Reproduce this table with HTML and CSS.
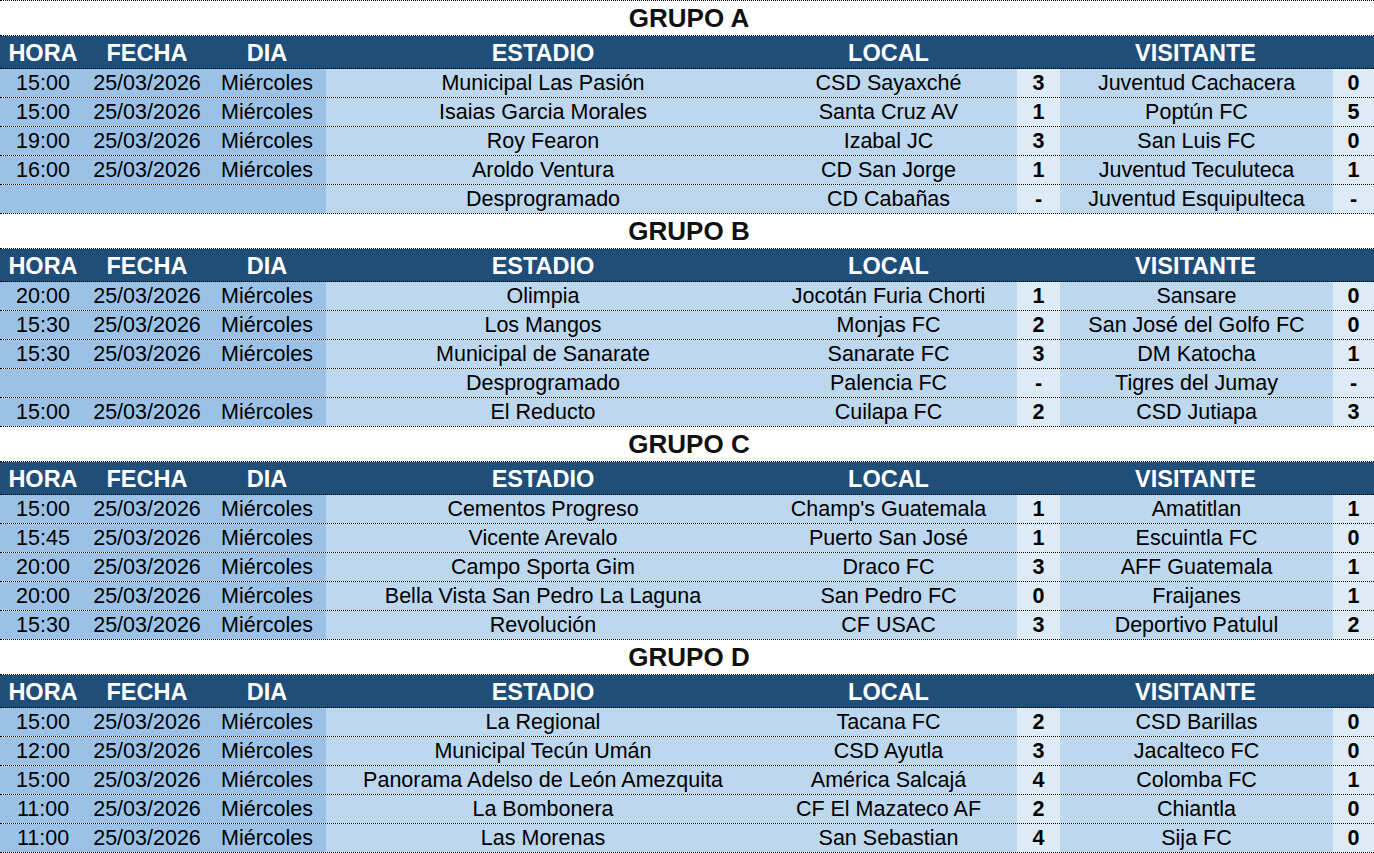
FILE: index.html
```html
<!DOCTYPE html>
<html lang="es">
<head>
<meta charset="utf-8">
<title>Grupos</title>
<link rel="stylesheet" href="styles.css">
</head>
<body>
<div class="sheet">

  <section class="group">
    <div class="title">GRUPO A</div>
    <div class="row head"><div>HORA</div><div>FECHA</div><div>DIA</div><div>ESTADIO</div><div>LOCAL</div><div class="span3">VISITANTE</div></div>
    <div class="row"><div class="l">15:00</div><div class="l">25/03/2026</div><div class="l">Miércoles</div><div class="m">Municipal Las Pasión</div><div class="m">CSD Sayaxché</div><div class="s">3</div><div class="m">Juventud Cachacera</div><div class="s">0</div></div>
    <div class="row"><div class="l">15:00</div><div class="l">25/03/2026</div><div class="l">Miércoles</div><div class="m">Isaias Garcia Morales</div><div class="m">Santa Cruz AV</div><div class="s">1</div><div class="m">Poptún FC</div><div class="s">5</div></div>
    <div class="row"><div class="l">19:00</div><div class="l">25/03/2026</div><div class="l">Miércoles</div><div class="m">Roy Fearon</div><div class="m">Izabal JC</div><div class="s">3</div><div class="m">San Luis FC</div><div class="s">0</div></div>
    <div class="row"><div class="l">16:00</div><div class="l">25/03/2026</div><div class="l">Miércoles</div><div class="m">Aroldo Ventura</div><div class="m">CD San Jorge</div><div class="s">1</div><div class="m">Juventud Teculuteca</div><div class="s">1</div></div>
    <div class="row"><div class="l"></div><div class="l"></div><div class="l"></div><div class="m">Desprogramado</div><div class="m">CD Cabañas</div><div class="s">-</div><div class="m">Juventud Esquipulteca</div><div class="s">-</div></div>
  </section>

  <section class="group">
    <div class="title">GRUPO B</div>
    <div class="row head"><div>HORA</div><div>FECHA</div><div>DIA</div><div>ESTADIO</div><div>LOCAL</div><div class="span3">VISITANTE</div></div>
    <div class="row"><div class="l">20:00</div><div class="l">25/03/2026</div><div class="l">Miércoles</div><div class="m">Olimpia</div><div class="m">Jocotán Furia Chorti</div><div class="s">1</div><div class="m">Sansare</div><div class="s">0</div></div>
    <div class="row"><div class="l">15:30</div><div class="l">25/03/2026</div><div class="l">Miércoles</div><div class="m">Los Mangos</div><div class="m">Monjas FC</div><div class="s">2</div><div class="m">San José del Golfo FC</div><div class="s">0</div></div>
    <div class="row"><div class="l">15:30</div><div class="l">25/03/2026</div><div class="l">Miércoles</div><div class="m">Municipal de Sanarate</div><div class="m">Sanarate FC</div><div class="s">3</div><div class="m">DM Katocha</div><div class="s">1</div></div>
    <div class="row"><div class="l"></div><div class="l"></div><div class="l"></div><div class="m">Desprogramado</div><div class="m">Palencia FC</div><div class="s">-</div><div class="m">Tigres del Jumay</div><div class="s">-</div></div>
    <div class="row"><div class="l">15:00</div><div class="l">25/03/2026</div><div class="l">Miércoles</div><div class="m">El Reducto</div><div class="m">Cuilapa FC</div><div class="s">2</div><div class="m">CSD Jutiapa</div><div class="s">3</div></div>
  </section>

  <section class="group">
    <div class="title">GRUPO C</div>
    <div class="row head"><div>HORA</div><div>FECHA</div><div>DIA</div><div>ESTADIO</div><div>LOCAL</div><div class="span3">VISITANTE</div></div>
    <div class="row"><div class="l">15:00</div><div class="l">25/03/2026</div><div class="l">Miércoles</div><div class="m">Cementos Progreso</div><div class="m">Champ's Guatemala</div><div class="s">1</div><div class="m">Amatitlan</div><div class="s">1</div></div>
    <div class="row"><div class="l">15:45</div><div class="l">25/03/2026</div><div class="l">Miércoles</div><div class="m">Vicente Arevalo</div><div class="m">Puerto San José</div><div class="s">1</div><div class="m">Escuintla FC</div><div class="s">0</div></div>
    <div class="row"><div class="l">20:00</div><div class="l">25/03/2026</div><div class="l">Miércoles</div><div class="m">Campo Sporta Gim</div><div class="m">Draco FC</div><div class="s">3</div><div class="m">AFF Guatemala</div><div class="s">1</div></div>
    <div class="row"><div class="l">20:00</div><div class="l">25/03/2026</div><div class="l">Miércoles</div><div class="m">Bella Vista San Pedro La Laguna</div><div class="m">San Pedro FC</div><div class="s">0</div><div class="m">Fraijanes</div><div class="s">1</div></div>
    <div class="row"><div class="l">15:30</div><div class="l">25/03/2026</div><div class="l">Miércoles</div><div class="m">Revolución</div><div class="m">CF USAC</div><div class="s">3</div><div class="m">Deportivo Patulul</div><div class="s">2</div></div>
  </section>

  <section class="group">
    <div class="title">GRUPO D</div>
    <div class="row head"><div>HORA</div><div>FECHA</div><div>DIA</div><div>ESTADIO</div><div>LOCAL</div><div class="span3">VISITANTE</div></div>
    <div class="row"><div class="l">15:00</div><div class="l">25/03/2026</div><div class="l">Miércoles</div><div class="m">La Regional</div><div class="m">Tacana FC</div><div class="s">2</div><div class="m">CSD Barillas</div><div class="s">0</div></div>
    <div class="row"><div class="l">12:00</div><div class="l">25/03/2026</div><div class="l">Miércoles</div><div class="m">Municipal Tecún Umán</div><div class="m">CSD Ayutla</div><div class="s">3</div><div class="m">Jacalteco FC</div><div class="s">0</div></div>
    <div class="row"><div class="l">15:00</div><div class="l">25/03/2026</div><div class="l">Miércoles</div><div class="m">Panorama Adelso de León Amezquita</div><div class="m">América Salcajá</div><div class="s">4</div><div class="m">Colomba FC</div><div class="s">1</div></div>
    <div class="row"><div class="l">11:00</div><div class="l">25/03/2026</div><div class="l">Miércoles</div><div class="m">La Bombonera</div><div class="m">CF El Mazateco AF</div><div class="s">2</div><div class="m">Chiantla</div><div class="s">0</div></div>
    <div class="row"><div class="l">11:00</div><div class="l">25/03/2026</div><div class="l">Miércoles</div><div class="m">Las Morenas</div><div class="m">San Sebastian</div><div class="s">4</div><div class="m">Sija FC</div><div class="s">0</div></div>
  </section>

</div>
</body>
</html>
```

FILE: styles.css
```css
* { box-sizing: border-box; }

html, body {
  margin: 0;
  padding: 0;
  background: #ffffff;
}

body {
  font-family: "Liberation Sans", Arial, sans-serif;
  color: #000000;
  width: 1374px;
  overflow: hidden;
}

.sheet {
  width: 1374px;
  border-top: 1px dotted #000;
}

.title {
  height: 35px;
  border-bottom: 1px dotted #000;
  font-weight: bold;
  font-size: 26px;
  line-height: 35px;
  text-align: center;
  padding-left: 4px;
  color: #111;
}

.row {
  display: grid;
  grid-template-columns: 86px 122px 118px 434px 257px 43px 273px 41px;
  height: 29px;
  border-bottom: 1px dotted #000;
  font-size: 21.5px;
  line-height: 28px;
}

.row > div {
  text-align: center;
  white-space: nowrap;
  overflow: hidden;
}

.row.head {
  height: 33px;
  background: #1f4e78;
  color: #ffffff;
  font-weight: bold;
  font-size: 23.5px;
  line-height: 34px;
  grid-template-columns: 86px 122px 118px 434px 257px 357px;
}

.l { background: #9bc2e6; }
.m { background: #bdd7ee; }
.s { background: #ddebf7; font-weight: bold; }
```
